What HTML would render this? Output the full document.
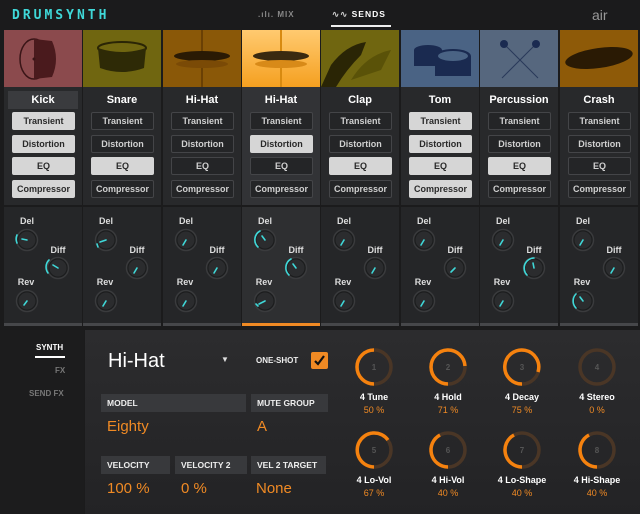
<!DOCTYPE html>
<html><head><meta charset="utf-8"><style>
*{margin:0;padding:0;box-sizing:border-box}
body{width:640px;height:514px;background:#1b1b1c;font-family:"Liberation Sans",sans-serif;position:relative;overflow:hidden;color:#fff}
.a{position:absolute}
.col{position:absolute;top:87px;width:78px;height:118px;background:#28292b}
.kcol{position:absolute;top:207px;width:78px;height:116px;background:#252628}
.bar{position:absolute;top:323px;width:78px;height:3px;background:#46474a}
.img{position:absolute;top:30px;width:78px;height:57px;overflow:hidden}
.nm{position:absolute;top:7px;left:0;width:78px;text-align:center;font-size:11px;font-weight:bold}
.b{position:absolute;left:8px;width:63px;height:18px;border:1px solid #444548;border-radius:2px;color:#d0d0d0;font-size:9px;font-weight:bold;text-align:center;line-height:16px;background:#242527}
.b.on{background:#d6d6d6;color:#2a2a2a;border-color:#d6d6d6}
.t1{top:25px}.t2{top:48px}.t3{top:70px}.t4{top:93px}
.hd{position:absolute;height:18px;background:#38393c;font-size:8.5px;font-weight:bold;color:#eee;line-height:18px;padding-left:6px}
.val{position:absolute;font-size:15px;color:#f08a24}
</style></head><body>
<!-- header -->
<div class="a" style="left:12px;top:8px;font-size:13px;font-weight:bold;color:#3fd8d8;letter-spacing:3px;font-family:'DejaVu Sans Mono',monospace">DRUMSYNTH</div>
<div class="a" style="left:258px;top:10px;font-size:8px;color:#888;font-weight:bold;letter-spacing:1px">.ılı. MIX</div>
<div class="a" style="left:332px;top:9px;font-size:8.5px;color:#fff;font-weight:bold;letter-spacing:1px"><span style="color:#ccc">∿∿</span> SENDS</div>
<div class="a" style="left:331px;top:25px;width:60px;height:2px;background:#eee"></div>
<div class="a" style="left:592px;top:7px;font-size:14px;color:#999">air</div>

<!-- images -->
<div class="img" style="left:4px;background:#8b4a4d"><svg width="78" height="57"><ellipse cx="30" cy="29" rx="14" ry="20" fill="none" stroke="#3a1517" stroke-width="1.5"/><path d="M30 9 L48 11 Q56 29 48 47 L30 49" fill="#4a1a1d"/><circle cx="30" cy="29" r="1.5" fill="#3a1517"/></svg></div>
<div class="img" style="left:83px;background:#706610"><svg width="78" height="57"><ellipse cx="39" cy="18" rx="24" ry="6" fill="none" stroke="#2a2505" stroke-width="2"/><path d="M15 18 L17 38 Q39 46 61 38 L63 18 Q39 26 15 18Z" fill="#2e2a06"/></svg></div>
<div class="img" style="left:163px;background:#8a5808"><svg width="78" height="57"><rect x="38" y="0" width="2" height="57" fill="#6a4004"/><ellipse cx="39" cy="26" rx="28" ry="5" fill="#2a1a04"/><ellipse cx="39" cy="34" rx="26" ry="4" fill="#7a4a06"/></svg></div>
<div class="img" style="left:242px;background:linear-gradient(#ffca70,#f5a020)"><svg width="78" height="57"><rect x="38" y="0" width="2" height="57" fill="#d88a10"/><ellipse cx="39" cy="26" rx="28" ry="5" fill="#3a2a10"/><ellipse cx="39" cy="34" rx="26" ry="4" fill="#d88a18"/></svg></div>
<div class="img" style="left:321px;background:#706610"><svg width="78" height="57"><path d="M0 57 L10 35 Q25 15 45 12 L40 25 Q25 40 15 57Z" fill="#2a2505"/><path d="M30 50 Q45 25 70 20 L60 40Z" fill="#5a5208"/></svg></div>
<div class="img" style="left:401px;background:#4a6384"><svg width="78" height="57"><ellipse cx="27" cy="20" rx="14" ry="5" fill="#1a2a50"/><rect x="13" y="20" width="28" height="16" fill="#1a2a50"/><ellipse cx="52" cy="26" rx="18" ry="7" fill="#1a2a50"/><rect x="34" y="26" width="36" height="20" fill="#1a2a50"/><ellipse cx="52" cy="26" rx="15" ry="5" fill="#4a6384"/></svg></div>
<div class="img" style="left:480px;background:#56677e"><svg width="78" height="57"><line x1="24" y1="14" x2="58" y2="48" stroke="#2a3a5a"/><line x1="56" y1="14" x2="22" y2="48" stroke="#2a3a5a"/><circle cx="24" cy="14" r="4" fill="#1a2a50"/><circle cx="56" cy="14" r="4" fill="#1a2a50"/></svg></div>
<div class="img" style="left:560px;background:#8e5a08"><svg width="78" height="57"><ellipse cx="39" cy="28" rx="34" ry="10" fill="#2a1a04" transform="rotate(-8 39 28)"/></svg></div>

<!-- button columns -->
<div class="col" style="left:4px"><div class="a" style="left:4px;top:4px;width:70px;height:18px;background:#3a3b3e"></div><div class="nm">Kick</div><div class="b t1 on">Transient</div><div class="b t2 on">Distortion</div><div class="b t3 on">EQ</div><div class="b t4 on">Compressor</div></div>
<div class="col" style="left:83px"><div class="nm">Snare</div><div class="b t1">Transient</div><div class="b t2">Distortion</div><div class="b t3 on">EQ</div><div class="b t4">Compressor</div></div>
<div class="col" style="left:163px"><div class="nm">Hi-Hat</div><div class="b t1">Transient</div><div class="b t2">Distortion</div><div class="b t3">EQ</div><div class="b t4">Compressor</div></div>
<div class="col" style="left:242px;background:#323336"><div class="nm">Hi-Hat</div><div class="b t1">Transient</div><div class="b t2 on">Distortion</div><div class="b t3">EQ</div><div class="b t4">Compressor</div></div>
<div class="col" style="left:321px"><div class="nm">Clap</div><div class="b t1">Transient</div><div class="b t2">Distortion</div><div class="b t3 on">EQ</div><div class="b t4">Compressor</div></div>
<div class="col" style="left:401px"><div class="nm">Tom</div><div class="b t1 on">Transient</div><div class="b t2 on">Distortion</div><div class="b t3 on">EQ</div><div class="b t4 on">Compressor</div></div>
<div class="col" style="left:480px"><div class="nm">Percussion</div><div class="b t1">Transient</div><div class="b t2">Distortion</div><div class="b t3 on">EQ</div><div class="b t4">Compressor</div></div>
<div class="col" style="left:560px"><div class="nm">Crash</div><div class="b t1">Transient</div><div class="b t2">Distortion</div><div class="b t3">EQ</div><div class="b t4">Compressor</div></div>

<!-- knob columns -->
<div class="kcol" style="left:4px"></div>
<div class="kcol" style="left:83px"></div>
<div class="kcol" style="left:163px"></div>
<div class="kcol" style="left:242px;background:#2e2f31"></div>
<div class="kcol" style="left:321px"></div>
<div class="kcol" style="left:401px"></div>
<div class="kcol" style="left:480px"></div>
<div class="kcol" style="left:560px"></div>
<div class="bar" style="left:4px"></div><div class="bar" style="left:83px"></div><div class="bar" style="left:163px"></div><div class="bar" style="left:242px;background:#f08a24"></div><div class="bar" style="left:321px"></div><div class="bar" style="left:401px"></div><div class="bar" style="left:480px"></div><div class="bar" style="left:560px"></div>

<svg class="a" style="left:0;top:207px" width="640" height="116" font-family="Liberation Sans" font-size="9" font-weight="bold" fill="#ddd" text-anchor="middle">
<defs>
<g id="k"><circle r="10.5" fill="#1c1d1e" stroke="#3a3b3d" stroke-width="1.5"/><circle r="8.5" fill="#2b2c2e"/></g>
<g id="kn">
<text x="23" y="17">Del</text><text x="54" y="46">Diff</text><text x="22" y="78">Rev</text>
<use href="#k" x="23" y="33"/><use href="#k" x="54" y="61"/><use href="#k" x="23" y="94"/>
</g>
</defs>
<use href="#kn" x="4"/><use href="#kn" x="83"/><use href="#kn" x="163"/><use href="#kn" x="242"/><use href="#kn" x="321"/><use href="#kn" x="401"/><use href="#kn" x="480"/><use href="#kn" x="560"/>
<g stroke="#3fd8d8" stroke-width="1.6" fill="none" stroke-linecap="round">
<g transform="translate(-4 2)">
<!-- kick -->
<line x1="31" y1="31" x2="26" y2="30"/><path d="M21 34 A10 10 0 0 1 21 26"/>
<line x1="62" y1="59" x2="57" y2="56"/><path d="M52 64 A10 10 0 0 1 53 51"/>
<line x1="31" y1="92" x2="28" y2="96"/>
<!-- snare -->
<line x1="110" y1="31" x2="104" y2="33"/><path d="M101 35 L102 38"/>
<line x1="141" y1="59" x2="138" y2="64"/><line x1="110" y1="92" x2="107" y2="97"/>
<!-- hh -->
<line x1="190" y1="31" x2="187" y2="36"/><line x1="221" y1="59" x2="218" y2="64"/><line x1="190" y1="92" x2="187" y2="97"/>
<!-- hh2 -->
<line x1="269" y1="31" x2="266" y2="27"/><path d="M262 38 A10 10 0 0 1 264 22"/>
<line x1="300" y1="59" x2="297" y2="55"/><path d="M293 66 A10 10 0 0 1 295 50"/>
<line x1="269" y1="92" x2="263" y2="95"/><path d="M260 95 L262 97"/>
<!-- clap -->
<line x1="348" y1="31" x2="345" y2="36"/><line x1="379" y1="59" x2="376" y2="64"/><line x1="348" y1="92" x2="345" y2="97"/>
<!-- tom -->
<line x1="428" y1="31" x2="425" y2="36"/><line x1="459" y1="59" x2="455" y2="63"/><line x1="428" y1="92" x2="425" y2="97"/>
<!-- perc -->
<line x1="507" y1="31" x2="504" y2="36"/><line x1="538" y1="59" x2="537" y2="54"/><path d="M531 66 A10 10 0 0 1 538 49"/><line x1="507" y1="92" x2="504" y2="97"/>
<!-- crash -->
<line x1="587" y1="31" x2="584" y2="36"/><line x1="618" y1="59" x2="615" y2="64"/><line x1="587" y1="92" x2="584" y2="88"/><path d="M580 99 A10 10 0 0 1 580 85"/>
</g>
</g>
</svg>

<!-- bottom -->
<div class="a" style="left:0;top:330px;width:84px;height:184px;background:#1c1c1d"></div>
<div class="a" style="left:36px;top:343px;font-size:8px;font-weight:bold;color:#fff">SYNTH</div>
<div class="a" style="left:35px;top:356px;width:30px;height:2px;background:#fff"></div>
<div class="a" style="left:55px;top:366px;font-size:8px;font-weight:bold;color:#777">FX</div>
<div class="a" style="left:29px;top:389px;font-size:8px;font-weight:bold;color:#777">SEND FX</div>
<div class="a" style="left:85px;top:330px;width:555px;height:184px;background:linear-gradient(#2c2c2e,#232325)"></div>

<div class="a" style="left:108px;top:350px;font-size:20px;color:#fff">Hi-Hat</div>
<div class="a" style="left:221px;top:355px;font-size:8px;color:#ddd">▼</div>
<div class="a" style="left:256px;top:356px;font-size:8px;font-weight:bold;color:#eee">ONE-SHOT</div>
<div class="a" style="left:311px;top:352px;width:17px;height:17px;background:#f08a24;border-radius:2px"><svg width="17" height="17"><path d="M4 9 L7 12 L13 4" stroke="#111" stroke-width="2.2" fill="none"/></svg></div>

<div class="hd" style="left:101px;top:394px;width:145px">MODEL</div>
<div class="hd" style="left:251px;top:394px;width:77px">MUTE GROUP</div>
<div class="val" style="left:107px;top:418px">Eighty</div>
<div class="val" style="left:257px;top:418px">A</div>
<div class="hd" style="left:101px;top:456px;width:69px">VELOCITY</div>
<div class="hd" style="left:175px;top:456px;width:72px">VELOCITY 2</div>
<div class="hd" style="left:251px;top:456px;width:75px">VEL 2 TARGET</div>
<div class="val" style="left:107px;top:480px">100 %</div>
<div class="val" style="left:181px;top:480px">0 %</div>
<div class="val" style="left:256px;top:480px">None</div>

<svg class="a" style="left:330px;top:330px" width="310" height="184" font-family="Liberation Sans" font-size="8" font-weight="bold" fill="#555" text-anchor="middle">
<g fill="none" stroke="#4a3626" stroke-width="3.5">
<circle cx="44" cy="37" r="17"/><circle cx="118" cy="37" r="17"/><circle cx="192" cy="37" r="17"/><circle cx="267" cy="37" r="17"/>
<circle cx="44" cy="120" r="17"/><circle cx="118" cy="120" r="17"/><circle cx="192" cy="120" r="17"/><circle cx="267" cy="120" r="17"/>
</g>
<g fill="none" stroke="#f5820f" stroke-width="3.5">
<path d="M44 54 A17 17 0 0 1 44 20"/>
<path d="M118 54 A17 17 0 1 1 135 36"/>
<path d="M192 54 A17 17 0 1 1 208 42"/>
<path d="M44 137 A17 17 0 1 1 58 110"/>
<path d="M118 137 A17 17 0 0 1 110 105"/>
<path d="M192 137 A17 17 0 0 1 184 105"/>
<path d="M267 137 A17 17 0 0 1 259 105"/>
</g>
<text x="44" y="40">1</text><text x="118" y="40">2</text><text x="192" y="40">3</text><text x="267" y="40">4</text>
<text x="44" y="123">5</text><text x="118" y="123">6</text><text x="192" y="123">7</text><text x="267" y="123">8</text>
<g fill="#fff" font-size="9"><text x="44" y="70">4 Tune</text><text x="118" y="70">4 Hold</text><text x="192" y="70">4 Decay</text><text x="267" y="70">4 Stereo</text>
<text x="44" y="153">4 Lo-Vol</text><text x="118" y="153">4 Hi-Vol</text><text x="192" y="153">4 Lo-Shape</text><text x="267" y="153">4 Hi-Shape</text></g>
<g fill="#f08a24" font-size="9" font-weight="normal"><text x="44" y="83">50 %</text><text x="118" y="83">71 %</text><text x="192" y="83">75 %</text><text x="267" y="83">0 %</text>
<text x="44" y="166">67 %</text><text x="118" y="166">40 %</text><text x="192" y="166">40 %</text><text x="267" y="166">40 %</text></g>
</svg>
</body></html>
